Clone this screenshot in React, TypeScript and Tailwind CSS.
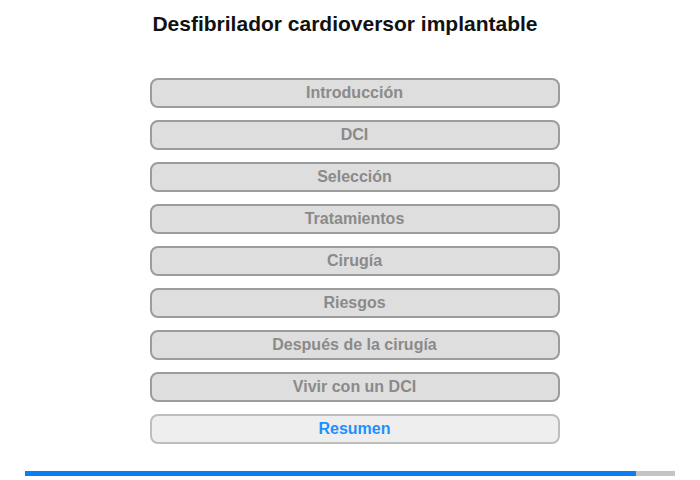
import React from "react";

const items = [
  "Introducción",
  "DCI",
  "Selección",
  "Tratamientos",
  "Cirugía",
  "Riesgos",
  "Después de la cirugía",
  "Vivir con un DCI",
];

export default function App() {
  return (
    <div
      className="w-[700px] h-[480px] bg-white flex flex-col items-center"
      style={{ fontFamily: '"Liberation Sans", Arial, sans-serif' }}
    >
      <h1 className="mt-[10px] h-[28px] leading-[28px] text-[21px] font-bold text-[#111] mr-[10px]">
        Desfibrilador cardioversor implantable
      </h1>
      <div className="mt-[40px] flex flex-col gap-[12px] w-[410px] ml-[9px]">
        {items.map((t) => (
          <div
            key={t}
            className="h-[30px] rounded-[8px] border-2 border-[#9c9c9c] bg-[#dedede] flex items-center justify-center text-[16px] font-bold text-[#8a8a8a]"
          >
            {t}
          </div>
        ))}
        <div className="h-[30px] rounded-[8px] border-2 border-[#bdbdbd] bg-[#eeeeee] flex items-center justify-center text-[16px] font-bold text-[#1e90ff]">
          Resumen
        </div>
      </div>
      <div className="mt-[27px] w-[650px] h-[5px] bg-[#c4c4c4] flex">
        <div className="w-[611px] h-full bg-[#0a7ff5]" />
      </div>
    </div>
  );
}
